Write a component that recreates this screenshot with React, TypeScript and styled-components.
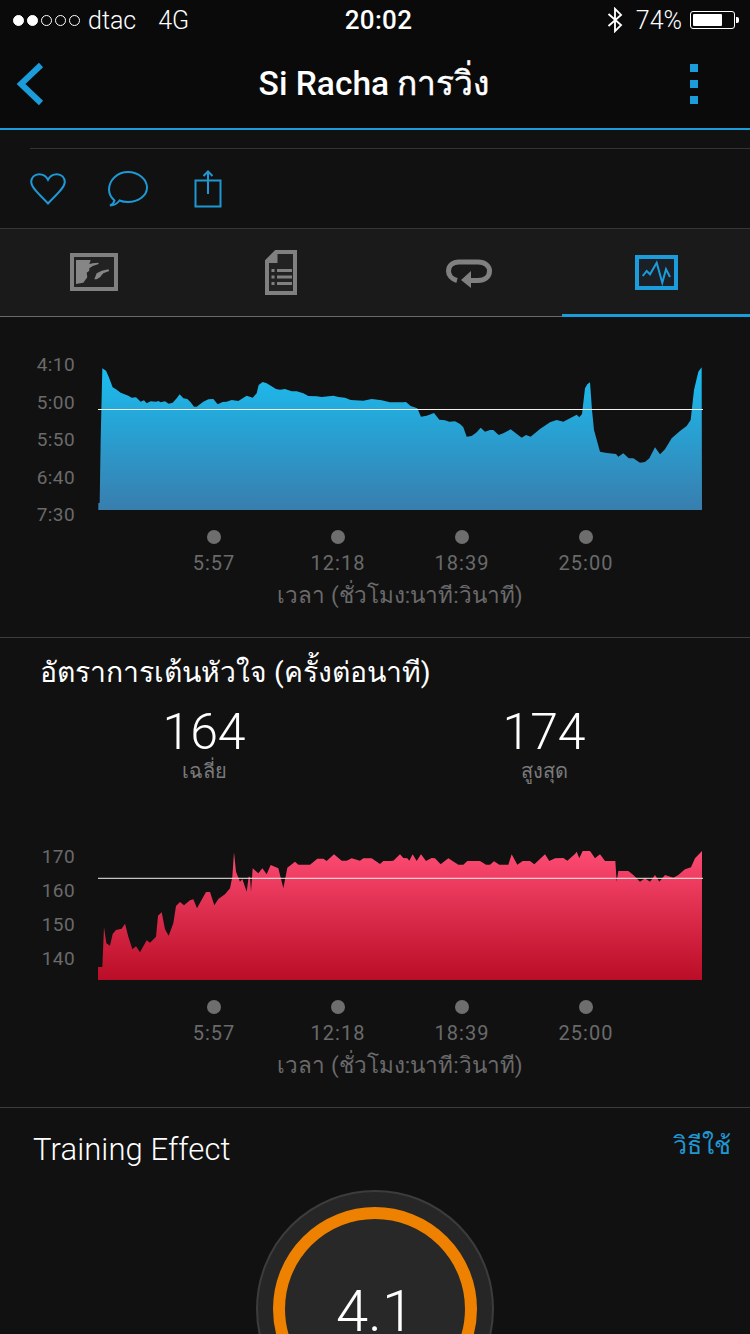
import React from "react";
import styled, { createGlobalStyle } from "styled-components";

const FONT = `Roboto, "Noto Sans", "Liberation Sans", "DejaVu Sans", sans-serif`;
const BLUE = "#1b9ddc";

const Global = createGlobalStyle`
  html, body { margin: 0; padding: 0; background: #111112; }
  body { width: 750px; height: 1334px; overflow: hidden; font-family: ${FONT}; }
  * { box-sizing: border-box; }
`;

const Page = styled.div`
  width: 750px;
  height: 1334px;
  overflow: hidden;
  background: #111112;
  color: #fff;
  display: flex;
  flex-direction: column;
`;

const Header = styled.header`
  background: #0a0a0b;
  border-bottom: 2px solid ${BLUE};
  height: 130px;
  flex: none;
`;

const StatusBar = styled.div`
  height: 40px;
  padding: 0 9px 0 13px;
  display: grid;
  grid-template-columns: 1fr auto 1fr;
  align-items: center;
  font-size: 25px;
  font-weight: 300;
`;

const StatusLeft = styled.div`
  display: flex;
  align-items: center;
`;

const Signal = styled.div`
  display: flex;
  gap: 3px;
  margin-right: 8px;
`;

const SignalDot = styled.span<{ $on: boolean }>`
  width: 11px;
  height: 11px;
  border-radius: 50%;
  border: 1px solid #fff;
  background: ${(p) => (p.$on ? "#fff" : "transparent")};
`;

const Carrier = styled.span`
  margin-right: 22px;
`;

const Clock = styled.div`
  font-weight: 500;
  font-size: 26px;
  letter-spacing: 0.3px;
  margin-left: 3px;
`;

const StatusRight = styled.div`
  display: flex;
  align-items: center;
  justify-content: flex-end;
  gap: 8px;
`;

const BluetoothIcon = styled.svg`
  display: block;
  margin-right: 4px;
  fill: none;
  stroke: #fff;
  stroke-width: 2;
`;

const BatteryBody = styled.div`
  width: 45px;
  height: 18px;
  border: 1px solid #fff;
  border-radius: 3px;
  padding: 2px;
  position: relative;
  margin-right: 6px;
  &::after {
    content: "";
    position: absolute;
    right: -5px;
    top: 5px;
    width: 3px;
    height: 6px;
    background: #fff;
    border-radius: 0 2px 2px 0;
  }
`;

const BatteryFill = styled.div`
  height: 100%;
  background: #fff;
  border-radius: 1px;
`;

const NavBar = styled.div`
  height: 88px;
  display: grid;
  grid-template-columns: 100px 1fr 100px;
  align-items: center;
`;

const BackButton = styled.div`
  padding-left: 15px;
  display: flex;
`;

const NavTitle = styled.h1`
  margin: 0 0 0 -2px;
  text-align: center;
  font-size: 33.5px;
  font-weight: 500;
  line-height: 88px;
`;

const ThaiStrong = styled.span`
  -webkit-text-stroke: 0.5px #fff;
`;

const MenuButton = styled.div`
  display: flex;
  flex-direction: column;
  gap: 8px;
  align-items: flex-end;
  padding-right: 52px;
`;

const MenuDot = styled.span`
  width: 8px;
  height: 8px;
  background: ${BLUE};
`;

const ActionPanel = styled.section`
  height: 99px;
  flex: none;
  padding: 18px 0 0 30px;
  border-bottom: 1px solid #353535;
`;

const ActionInner = styled.div`
  border-top: 1px solid #333;
  display: flex;
  align-items: center;
  height: 80px;
`;

const ActionIcon = styled.svg<{ $gap: number }>`
  display: block;
  margin-right: ${(p) => p.$gap}px;
  fill: none;
  stroke: #1f97d2;
  stroke-width: 2;
`;

const TabBar = styled.nav`
  height: 88px;
  flex: none;
  background: #1a1a1b;
  border-bottom: 1px solid #6a6a6a;
  display: grid;
  grid-template-columns: repeat(4, 1fr);
`;

const Tab = styled.div<{ $active?: boolean }>`
  position: relative;
  display: flex;
  align-items: center;
  justify-content: center;
  padding-bottom: 1px;
  ${(p) =>
    p.$active &&
    `&::after { content: ""; position: absolute; left: -1px; right: 0; bottom: -1px; height: 3px; background: ${BLUE}; }`}
`;

const ChartSection = styled.section<{ $height: number }>`
  height: ${(p) => p.$height}px;
  flex: none;
  border-bottom: 1px solid #3c3c3c;
`;

const PaceBlock = styled.div`
  padding-top: 36px;
`;

const ChartRow = styled.div`
  display: flex;
  align-items: flex-start;
`;

const YAxis = styled.div<{ $height: number }>`
  width: 75px;
  height: ${(p) => p.$height}px;
  margin: 1px 23px 0 0;
  display: flex;
  flex-direction: column;
  justify-content: space-between;
  align-items: flex-end;
  color: #6a6a6a;
  font-size: 19px;
  letter-spacing: 0.4px;
  line-height: 22px;
`;

const Plot = styled.svg<{ $top: number }>`
  display: block;
  margin-top: ${(p) => p.$top}px;
  overflow: visible;
`;

const XAxis = styled.div<{ $top: number }>`
  margin: ${(p) => p.$top}px 0 0 98px;
  width: 604px;
  display: flex;
  justify-content: center;
`;

const Tick = styled.div`
  width: 124px;
  display: flex;
  flex-direction: column;
  align-items: center;
  color: #6a6a6a;
  font-size: 20px;
  letter-spacing: 1px;
  line-height: 24px;
`;

const TickDot = styled.span`
  width: 14px;
  height: 14px;
  border-radius: 50%;
  background: #6e6e6e;
  margin-bottom: 7px;
`;

const AxisCaption = styled.div`
  margin: 6px 0 0 98px;
  width: 604px;
  text-align: center;
  color: #6a6a6a;
  font-size: 22.5px;
  line-height: 28px;
`;

const HeartTitle = styled.h2`
  margin: 0;
  padding: 15px 0 0 40px;
  font-size: 28.3px;
  font-weight: 400;
  line-height: 40px;
`;

const Stats = styled.div`
  display: grid;
  grid-template-columns: 340px 340px;
  padding-left: 34px;
  margin-top: 11px;
`;

const Stat = styled.div`
  display: flex;
  flex-direction: column;
  align-items: center;
`;

const StatValue = styled.div`
  font-size: 50px;
  font-weight: 300;
  line-height: 56px;
`;

const StatLabel = styled.div`
  font-size: 20px;
  line-height: 24px;
  margin-top: -1px;
  color: #7a7a7a;
`;

const HeartChart = styled.div`
  margin-top: 62px;
`;

const TrainingSection = styled.section`
  flex: 1;
`;

const TrainingHead = styled.div`
  display: flex;
  justify-content: space-between;
  align-items: flex-start;
  padding: 22px 19px 0 33px;
`;

const TrainingTitle = styled.h2`
  margin: 0;
  font-size: 31px;
  font-weight: 300;
  letter-spacing: 0.1px;
  line-height: 40px;
`;

const HowTo = styled.a`
  color: #1f97d2;
  font-size: 25px;
  line-height: 32px;
`;

const GaugeWrap = styled.div`
  display: flex;
  justify-content: center;
  margin-top: 20px;
`;

const GaugeOuter = styled.div`
  width: 238px;
  height: 238px;
  flex: none;
  border-radius: 50%;
  background: #262626;
  border: 2px solid #3c3c3c;
  display: flex;
  align-items: center;
  justify-content: center;
`;

const GaugeRing = styled.div`
  width: 204px;
  height: 204px;
  border-radius: 50%;
  border: 12px solid #ee8200;
  background: #282828;
  display: flex;
  align-items: center;
  justify-content: center;
`;

const GaugeValue = styled.div`
  font-size: 58px;
  font-weight: 300;
  line-height: 60px;
  padding-top: 3px;
`;

type P = [number, number];

const bluePts: P[] = ([
  [205,510],[205,490],[209,488],[212,300],[217,85],[228,92],[236,110],[248,142],[258,148],[272,158],[295,167],[305,173],[318,172],[332,185],[342,181],[350,190],[362,184],[378,185],[385,183],[392,187],[405,184],[416,191],[428,188],[440,175],[449,163],[460,175],[472,177],[482,187],[492,200],[500,200],[520,185],[535,178],[550,177],[563,193],[578,186],[590,185],[605,180],[625,183],[650,167],[668,173],[680,160],[686,135],[698,126],[710,130],[738,147],[750,149],[765,147],[785,154],[800,154],[820,160],[835,168],[860,169],[875,171],[910,167],[925,171],[945,173],[962,180],[1000,182],[1025,177],[1055,181],[1080,187],
] as P[]).map(([x, y]) => [30 + x / 3, 340 + y / 3] as P).concat(([
  [40,187],[48,186],[62,198],[82,205],[93,230],[110,227],[132,219],[148,239],[165,241],[178,245],[195,244],[210,252],[220,262],[230,290],[245,288],[260,277],[272,263],[285,275],[300,270],[310,270],[326,285],[340,280],[362,268],[395,293],[408,285],[422,290],[450,267],[480,247],[500,240],[520,245],[560,224],[568,232],[576,222],[585,145],[592,133],[600,127],[606,210],[612,270],[630,335],[650,339],[678,342],[685,350],[700,340],[716,355],[730,355],[750,368],[765,366],[778,355],[795,322],[810,343],[825,328],[845,295],[870,273],[890,258],[902,240],[912,150],[925,95],[935,82],[936,510],
] as P[]).map(([x, y]) => [390 + x / 3, 340 + y / 3] as P));

const redPts: P[] = ([
  [204,450],[204,411],[217,411],[222,292],[229,340],[240,347],[248,312],[258,300],[275,296],[285,281],[295,320],[307,358],[318,349],[330,367],[350,331],[360,338],[378,320],[384,257],[395,247],[405,298],[416,317],[430,280],[438,228],[450,216],[462,226],[480,211],[490,208],[501,235],[528,186],[540,186],[553,226],[565,207],[585,193],[600,175],[607,140],[612,67],[618,125],[630,155],[637,147],[650,185],[656,140],[660,140],[663,185],[668,115],[685,130],[697,115],[710,133],[722,105],[745,115],[760,175],[772,113],[795,95],[805,104],[840,104],[862,86],[880,86],[890,93],[912,73],[935,92],[950,92],[965,85],[990,92],[1000,85],[1025,85],[1050,102],[1060,93],[1080,93],
] as P[]).map(([x, y]) => [30 + x / 3, 830 + y / 3] as P).concat(([
  [10,92],[30,73],[40,84],[52,85],[58,92],[68,73],[80,93],[93,73],[108,93],[125,84],[135,85],[152,103],[175,85],[205,104],[220,104],[232,93],[270,93],[288,104],[300,104],[312,94],[328,104],[355,104],[365,73],[382,104],[398,93],[420,93],[433,103],[465,73],[478,93],[495,85],[520,84],[532,92],[555,72],[560,65],[568,85],[578,63],[600,63],[615,85],[630,73],[645,93],[676,93],[680,155],[685,123],[715,123],[730,135],[750,155],[765,145],[780,155],[795,135],[808,155],[825,135],[850,143],[865,135],[885,118],[903,112],[915,85],[936,63],[936,450],
] as P[]).map(([x, y]) => [390 + x / 3, 830 + y / 3] as P));

const AreaChart = ({ id, pts, top, y0, h, lineY, from, to }: {
  id: string; pts: P[]; top: number; y0: number; h: number; lineY: number; from: string; to: string;
}) => (
  <Plot width={604} height={h} viewBox={`98 ${y0} 604 ${h}`} $top={top}>
    <defs>
      <linearGradient id={id} x1="0" y1="0" x2="0" y2="1">
        <stop offset="0" stopColor={from} />
        <stop offset="1" stopColor={to} />
      </linearGradient>
    </defs>
    <polygon fill={`url(#${id})`} points={pts.map((p) => p.join(",")).join(" ")} />
    <line x1={98} x2={703} y1={lineY} y2={lineY} stroke="#f2f2ee" strokeWidth="1" />
  </Plot>
);

const Axis = ({ top }: { top: number }) => (
  <>
    <XAxis $top={top}>
      {["5:57", "12:18", "18:39", "25:00"].map((t) => (
        <Tick key={t}>
          <TickDot />
          {t}
        </Tick>
      ))}
    </XAxis>
    <AxisCaption>เวลา (ชั่วโมง:นาที:วินาที)</AxisCaption>
  </>
);

export default function App() {
  return (
    <Page>
      <Global />
      <Header>
        <StatusBar>
          <StatusLeft>
            <Signal>
              {[true, true, false, false, false].map((on, i) => (
                <SignalDot key={i} $on={on} />
              ))}
            </Signal>
            <Carrier>dtac</Carrier>
            <span>4G</span>
          </StatusLeft>
          <Clock>20:02</Clock>
          <StatusRight>
            <BluetoothIcon width="18" height="26" viewBox="0 0 18 28">
              <path d="M2 7.500 15.500 19.500 9 26V2l6.500 6.500L2 20.500" />
            </BluetoothIcon>
            <span>74%</span>
            <BatteryBody>
              <BatteryFill style={{ width: "74%" }} />
            </BatteryBody>
          </StatusRight>
        </StatusBar>
        <NavBar>
          <BackButton>
            <svg width="30" height="44" viewBox="0 0 30 44" fill="none" stroke={BLUE} strokeWidth="6">
              <path d="M26 3 6 22l20 19" />
            </svg>
          </BackButton>
          <NavTitle>
            Si Racha <ThaiStrong>การวิ่ง</ThaiStrong>
          </NavTitle>
          <MenuButton>
            <MenuDot />
            <MenuDot />
            <MenuDot />
          </MenuButton>
        </NavBar>
      </Header>

      <ActionPanel>
        <ActionInner>
          <ActionIcon $gap={42} width="36" height="32" viewBox="0 0 36 32">
            <path d="M18 30.500C11 23 1.200 15 1.200 9 1.200 4.500 4.600 1.200 9 1.200c4 0 7.400 2.300 9 5.600 1.600-3.300 5-5.600 9-5.600 4.400 0 7.800 3.300 7.800 7.800 0 6-9.800 14-16.800 21.500Z" />
          </ActionIcon>
          <ActionIcon $gap={46} width="40" height="36" viewBox="0 0 40 36">
            <path d="M2 34.500c2.500-1 4-3 4.500-5C3 26.500 1 23 1 18.500 1 9 9.500 1 20 1s19 7.500 19 15.500S30.500 31 20 31c-3 0-6-.5-8.500-1.500C9 33 5.500 34.500 2 34.500Z" />
          </ActionIcon>
          <ActionIcon $gap={0} width="28" height="38" viewBox="0 0 28 38">
            <path d="M1.500 10.500H26.500V36.500H1.500ZM14 24V1.500M9.500 6 14 1.500 18.500 6" />
          </ActionIcon>
        </ActionInner>
      </ActionPanel>

      <TabBar>
        <Tab>
          <svg width="48" height="38" viewBox="0 0 48 38">
            <rect x="2" y="2" width="44" height="34" fill="#222" stroke="#808080" strokeWidth="4" />
            <path fill="#868686" d="M6 7H20.700L19.300 11 22.700 10.300 28.300 9.700 28.700 11 22.700 13 19.300 15.300V17.700L16.700 19.700 17.300 24.300 13.300 29.700 6 31Z" />
            <path fill="#868686" d="M24.300 26.300 26.700 20.300 31.700 17.700 38.300 16.300 39.300 18 33.300 20.300 30 24.300 26.700 26.300Z" />
          </svg>
        </Tab>
        <Tab>
          <svg width="32" height="45" viewBox="0 0 32 45">
            <path fill="#222" stroke="#808080" strokeWidth="4" d="M11 2h19v41H2V11Z" />
            <path fill="#808080" d="M12.500 1v12H1ZM6.500 19h3v3h-3ZM12 19h15v3H12ZM6.500 25.500h3v3h-3ZM12 25.500h15v3H12ZM6.500 32h3v3h-3ZM12 32h15v3H12Z" />
          </svg>
        </Tab>
        <Tab>
          <svg width="46" height="34" viewBox="0 -4 46 34" fill="none" stroke="#808080" strokeWidth="5">
            <path d="M11 21.500C5.500 20 2.500 16 2.500 12 2.500 6.500 7 3 13 3H32C39 3 43.500 7 43.500 12c0 6-5 9.500-11.500 9.500H21" />
            <path fill="#808080" stroke="none" d="M25 12v17l-10-8Z" />
          </svg>
        </Tab>
        <Tab $active>
          <svg width="43" height="35" viewBox="0 0 43 35" fill="none" stroke={BLUE}>
            <rect x="2" y="2" width="39" height="31" strokeWidth="4" fill="#1a2026" />
            <path strokeWidth="2" d="M7.700 21 11.700 16 15 19.300 21.700 7.700 27.300 27.700 31 14.300 35 22" />
          </svg>
        </Tab>
      </TabBar>

      <ChartSection $height={321}>
        <PaceBlock>
          <ChartRow>
            <YAxis $height={172}>
              {["4:10", "5:00", "5:50", "6:40", "7:30"].map((t) => (
                <span key={t}>{t}</span>
              ))}
            </YAxis>
            <AreaChart id="pace" top={7} pts={bluePts} y0={360} h={150} lineY={409.5} from="#1bbdf0" to="#387eae" />
          </ChartRow>
          <Axis top={4} />
        </PaceBlock>
      </ChartSection>

      <ChartSection $height={470}>
        <HeartTitle>อัตราการเต้นหัวใจ (ครั้งต่อนาที)</HeartTitle>
        <Stats>
          <Stat>
            <StatValue>164</StatValue>
            <StatLabel>เฉลี่ย</StatLabel>
          </Stat>
          <Stat>
            <StatValue>174</StatValue>
            <StatLabel>สูงสุด</StatLabel>
          </Stat>
        </Stats>
        <HeartChart>
          <ChartRow>
            <YAxis $height={124}>
              {["170", "160", "150", "140"].map((t) => (
                <span key={t}>{t}</span>
              ))}
            </YAxis>
            <AreaChart id="hr" top={0} pts={redPts} y0={845} h={135} lineY={878.3} from="#fd4b72" to="#ba0d26" />
          </ChartRow>
          <Axis top={20} />
        </HeartChart>
      </ChartSection>

      <TrainingSection>
        <TrainingHead>
          <TrainingTitle>Training Effect</TrainingTitle>
          <HowTo>วิธีใช้</HowTo>
        </TrainingHead>
        <GaugeWrap>
          <GaugeOuter>
            <GaugeRing>
              <GaugeValue>4.1</GaugeValue>
            </GaugeRing>
          </GaugeOuter>
        </GaugeWrap>
      </TrainingSection>
    </Page>
  );
}
